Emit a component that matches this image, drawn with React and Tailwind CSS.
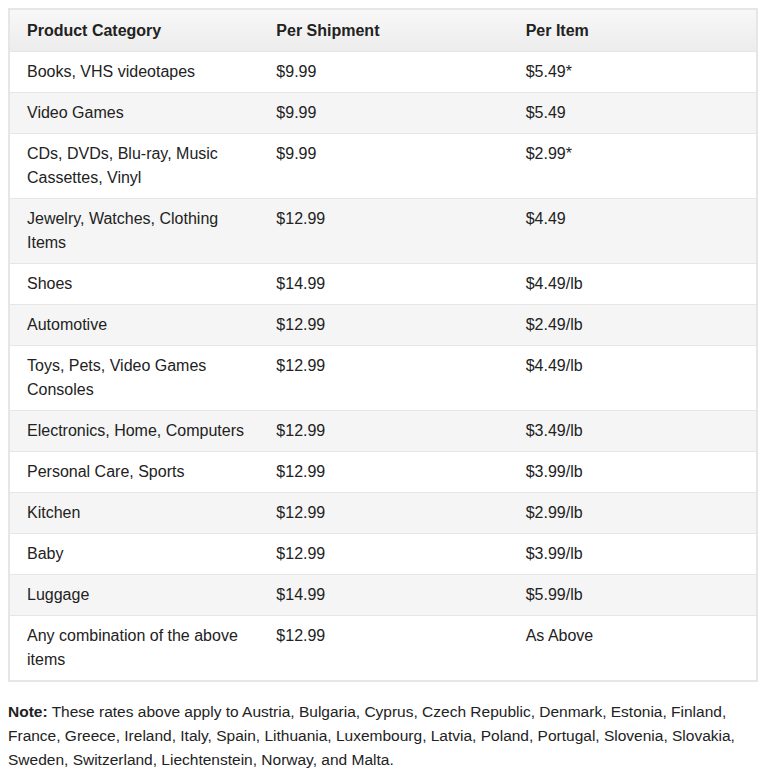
const rows = [
  ["Books, VHS videotapes", "$9.99", "$5.49*"],
  ["Video Games", "$9.99", "$5.49"],
  ["CDs, DVDs, Blu-ray, Music Cassettes, Vinyl", "$9.99", "$2.99*"],
  ["Jewelry, Watches, Clothing Items", "$12.99", "$4.49"],
  ["Shoes", "$14.99", "$4.49/lb"],
  ["Automotive", "$12.99", "$2.49/lb"],
  ["Toys, Pets, Video Games Consoles", "$12.99", "$4.49/lb"],
  ["Electronics, Home, Computers", "$12.99", "$3.49/lb"],
  ["Personal Care, Sports", "$12.99", "$3.99/lb"],
  ["Kitchen", "$12.99", "$2.99/lb"],
  ["Baby", "$12.99", "$3.99/lb"],
  ["Luggage", "$14.99", "$5.99/lb"],
  ["Any combination of the above items", "$12.99", "As Above"],
];

export default function App() {
  return (
    <div className="min-h-[780px] bg-white p-2 text-[16px] leading-6 text-[#222] font-['Liberation_Sans',Arial,sans-serif]">
      {/* Rates table */}
      <table className="w-[750px] table-fixed border-collapse border-2 border-[#e6e6e6]">
        <thead>
          <tr className="bg-gradient-to-b from-[#f8f8f8] to-[#ececec]">
            <th className="w-1/3 pl-[17px] pr-2 pt-[9px] pb-2 text-left font-bold">Product Category</th>
            <th className="w-1/3 pl-[18px] pr-2 pt-[9px] pb-2 text-left font-bold">Per Shipment</th>
            <th className="w-1/3 pl-[18px] pr-2 pt-[9px] pb-2 text-left font-bold">Per Item</th>
          </tr>
        </thead>
        <tbody>
          {rows.map((r, i) => (
            <tr
              key={r[0]}
              className={`border-t border-[#e6e6e6] ${i % 2 ? "bg-[#f5f5f5]" : "bg-white"}`}
            >
              <td className="pl-[17px] pr-2 pt-2 pb-2 align-top">{r[0]}</td>
              <td className="pl-[18px] pr-2 pt-2 pb-2 align-top">{r[1]}</td>
              <td className="pl-[18px] pr-2 pt-2 pb-2 align-top">{r[2]}</td>
            </tr>
          ))}
        </tbody>
      </table>

      <p className="mt-[18px] w-[750px] text-[15.5px]">
        <b>Note:</b> These rates above apply to Austria, Bulgaria, Cyprus, Czech Republic, Denmark,
        Estonia, Finland, France, Greece, Ireland, Italy, Spain, Lithuania, Luxembourg, Latvia,
        Poland, Portugal, Slovenia, Slovakia, Sweden, Switzerland, Liechtenstein, Norway, and Malta.
      </p>
    </div>
  );
}
